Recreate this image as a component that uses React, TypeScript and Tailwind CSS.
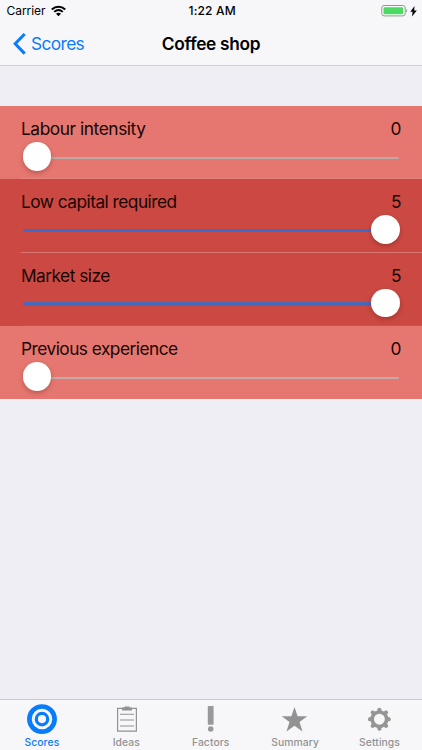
import type { ReactNode } from "react";

type Factor = { name: string; value: number; row: string; line: string; rail: string; track: string };

const factors: Factor[] = [
  { name: "Labour intensity", value: 0, row: "h-[73px] bg-[#e67770]", line: "bg-[#e8827d]", rail: "h-[2px] bg-[#b8aaa9]", track: "-tracking-[0.42px]" },
  { name: "Low capital required", value: 5, row: "h-[73.5px] bg-[#cb4942]", line: "bg-[#d87771]", rail: "h-[3px] bg-[#3c6ccb]", track: "-tracking-[0.52px]" },
  { name: "Market size", value: 5, row: "h-[73.5px] bg-[#cb4942]", line: "bg-[#bd5851]", rail: "h-[3.4px] bg-[#4c68ba]", track: "-tracking-[0.52px]" },
  { name: "Previous experience", value: 0, row: "h-[73px] bg-[#e67770]", line: "bg-[#e67770]", rail: "h-[2px] bg-[#c3aaa8]", track: "-tracking-[0.52px]" },
];

function FactorRow({ name, value, row, line, rail, track }: Factor) {
  const full = value === 5;
  return (
    <div className={`flex flex-col pl-[21px] ${row}`}>
      <div className="flex h-[36px] items-end justify-between pr-[20.5px] text-[17.3px] leading-[26px] text-[#170504]">
        <span className={track}>{name}</span>
        <span>{value}</span>
      </div>
      <div className="grid h-[29px] w-[378.6px] items-center pl-[2px]">
        <div className={`col-start-1 row-start-1 mt-[2px] mr-[0.6px] rounded-[1px] ${rail}`} />
        <div className={`z-10 col-start-1 row-start-1 size-[28.4px] rounded-full bg-white shadow-[0_2px_5px_rgba(70,0,0,0.28)] ${full ? "justify-self-end" : ""}`} />
      </div>
      <div className={`mt-auto h-px ${line}`} />
    </div>
  );
}

function Tab({ label, active, children }: { label: string; active?: boolean; children: ReactNode }) {
  return (
    <div className={`flex flex-1 flex-col items-center ${active ? "text-[#087cfb]" : "text-[#929292]"}`}>
      <svg className="mt-[4px] h-[31px] w-[32px]" viewBox="0 0 32 31" fill="none">{children}</svg>
      <span className="mt-[1px] mr-[0.6px] text-[10.3px] leading-[13px] font-medium tracking-[0.1px]">{label}</span>
    </div>
  );
}

const teeth = [0, 45, 90, 135, 180, 225, 270, 315];

export default function App() {
  return (
    <div className="flex h-[750px] w-[422px] flex-col overflow-hidden bg-[#efeef5] font-['Inter','Liberation_Sans',sans-serif] text-black">
      <header className="h-[66px] border-b border-[#d1d0d6] bg-[#f7f7f9]">
        <div className="grid h-[22px] grid-cols-3 items-center pl-[6.5px] pr-[5px] text-[12px] leading-[22px]">
          <div className="flex items-center gap-[6px]">
            <span className="-tracking-[0.05px]">Carrier</span>
            <svg width="15" height="12" viewBox="0 0 15 12" fill="none" stroke="black">
              <path d="M.8 4.4C4.7.8 10.3.8 14.2 4.4" strokeWidth="2.1" />
              <path d="M3.2 6.9C5.8 4.6 9.2 4.6 11.8 6.9" strokeWidth="1.9" />
              <path d="M7.5 11.2 5 8.8C6.5 7.5 8.5 7.5 10 8.8Z" fill="black" stroke="none" />
            </svg>
          </div>
          <span className="pl-[1px] text-center font-medium tracking-[0.2px]">1:22 AM</span>
          <div className="flex items-center justify-end gap-[2px]">
            <svg width="27" height="12" viewBox="0 0 27 12">
              <rect x=".8" y=".5" width="23.4" height="10.4" rx="2.4" fill="#fbfffb" stroke="#8f9690" />
              <rect x="2.5" y="2.2" width="19.5" height="7" rx=".8" fill="#4cd964" />
              <path d="M25.2 3.9q2 1.8 0 3.6Z" fill="#8f9690" />
            </svg>
            <svg width="7" height="11" viewBox="0 0 7 11"><path d="M4.5 0 .3 5.8H2.6L2 10.6 6.8 4.5H4.2Z" /></svg>
          </div>
        </div>
        <div className="grid h-[43px] grid-cols-3 items-center pl-[13px] pr-[13px] text-[17.3px]">
          <div className="flex items-center gap-[5px] text-[#087cfb]">
            <svg width="13" height="22" viewBox="0 0 13 22" fill="none" stroke="currentColor" strokeWidth="3"><path d="M11.7 1 2.2 10.8l9.5 9.8" /></svg>
            <span className="-tracking-[0.6px]">Scores</span>
          </div>
          <h1 className="text-center font-semibold whitespace-nowrap -tracking-[0.3px]">Coffee shop</h1>
        </div>
      </header>

      <main className="flex-1 pt-[40px]">
        {factors.map((factor) => <FactorRow key={factor.name} {...factor} />)}
      </main>

      <nav className="flex h-[51px] border-t border-[#c8c8cb] bg-[#f7f7f9]">
        <Tab label="Scores" active>
          <circle cx="16" cy="15.1" r="12.6" stroke="currentColor" strokeWidth="4.7" />
          <circle cx="16" cy="15.1" r="5.7" stroke="currentColor" strokeWidth="3.2" />
        </Tab>
        <Tab label="Ideas">
          <path d="M6.6 4.3H25.4V27.2H6.6Z" stroke="currentColor" strokeWidth="1.2" />
          <path d="M9 10.3H23M9 16H23M9 22H23" stroke="currentColor" strokeWidth="1.1" />
          <path d="M11 3.5h2.5v-1h5v1H21v3H11Z" fill="currentColor" />
        </Tab>
        <Tab label="Factors">
          <rect x="12.8" y="2" width="5.8" height="18.8" rx=".7" fill="#999" />
          <circle cx="15.7" cy="25" r="2.8" fill="#999" />
        </Tab>
        <Tab label="Summary">
          <path d="m15.5 3 3.1 9.3h9.7l-7.8 5.8 3 9.3-8-5.7-8 5.7 3-9.3-7.8-5.8h9.7Z" fill="#929292" />
        </Tab>
        <Tab label="Settings">
          <circle cx="15.4" cy="15.2" r="7.2" stroke="#959595" strokeWidth="3.5" />
          {teeth.map((angle) => (
            <path key={angle} d="M13 7.7 13.7 4.4Q15.4 3 17.1 4.4L17.8 7.7Z" fill="#959595" transform={`rotate(${angle} 15.4 15.2)`} />
          ))}
        </Tab>
      </nav>
    </div>
  );
}
